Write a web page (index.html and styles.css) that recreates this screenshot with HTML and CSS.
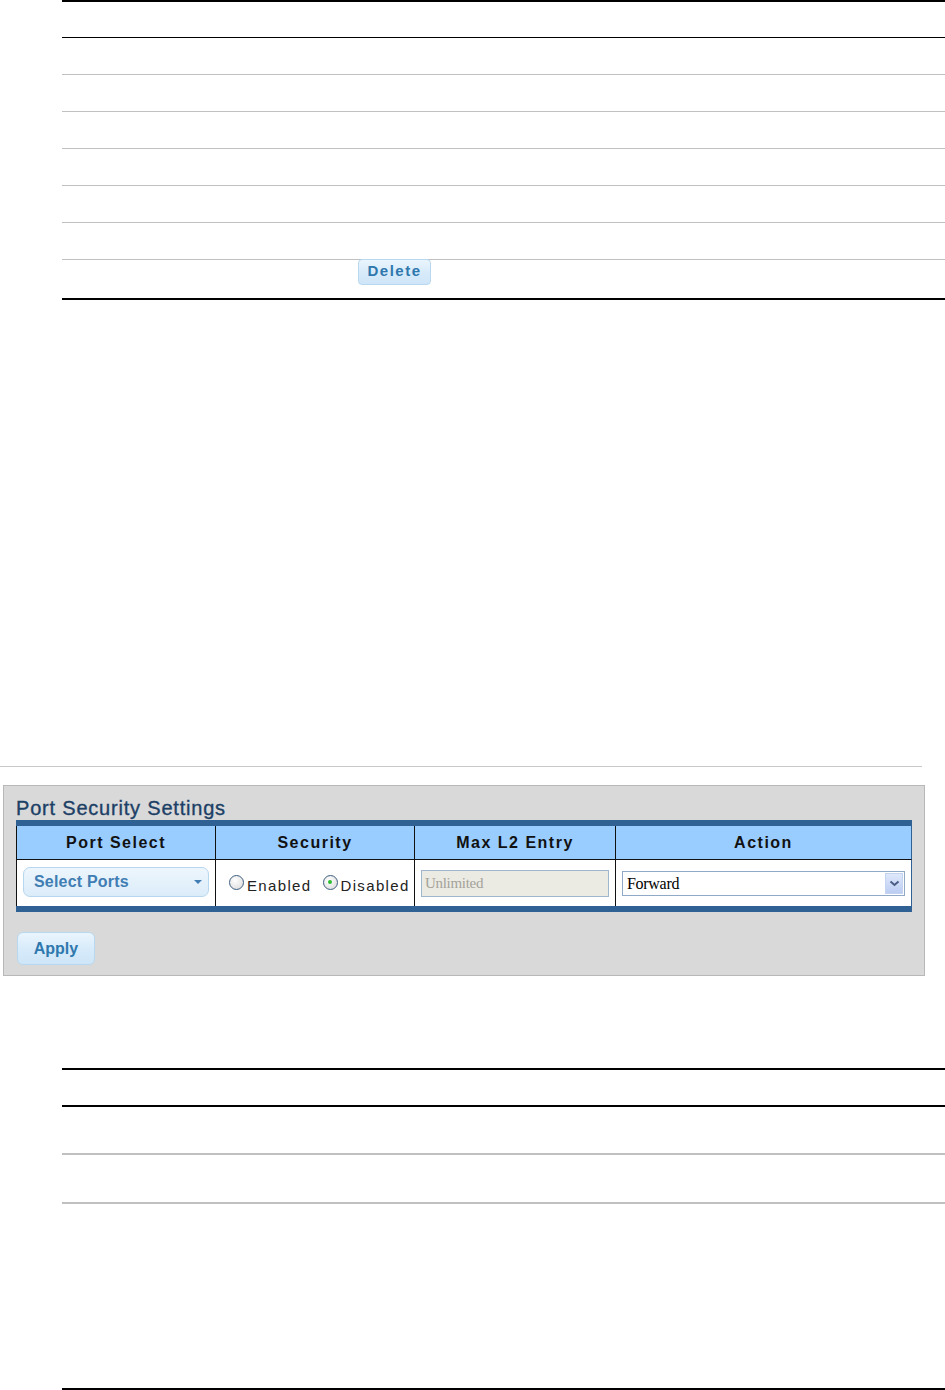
FILE: index.html
```html
<!DOCTYPE html>
<html>
<head>
<meta charset="utf-8">
<link rel="stylesheet" href="styles.css">
</head>
<body>
<div class="rules top-rules">
  <div class="row head"></div>
  <div class="row"></div>
  <div class="row"></div>
  <div class="row"></div>
  <div class="row"></div>
  <div class="row"></div>
  <div class="row"></div>
  <div class="row last"><button class="btn delete">Delete</button></div>
</div>

<div class="sep"></div>

<div class="panel">
  <div class="panel-title">Port Security Settings</div>
  <div class="tbl">
    <div class="th c1">Port Select</div>
    <div class="th c2">Security</div>
    <div class="th c3">Max L2 Entry</div>
    <div class="th c4">Action</div>
    <div class="td c1">
      <div class="portsel"><span>Select Ports</span><span class="caret"></span></div>
    </div>
    <div class="td c2">
      <span class="radio"></span><span class="rlabel">Enabled</span>
      <span class="radio on"></span><span class="rlabel">Disabled</span>
    </div>
    <div class="td c3">
      <div class="input">Unlimited</div>
    </div>
    <div class="td c4">
      <div class="select"><span>Forward</span><span class="arrow"><svg width="11" height="7" viewBox="0 0 11 7"><path d="M1.5 1.5 L5.5 5 L9.5 1.5" fill="none" stroke="#4a5d85" stroke-width="2"/></svg></span></div>
    </div>
  </div>
  <button class="btn apply">Apply</button>
</div>

<div class="rules bottom-rules">
  <div class="brow b1"></div>
  <div class="brow b2"></div>
  <div class="brow b3"></div>
  <div class="brow b4"></div>
</div>
</body>
</html>
```

FILE: styles.css
```css
html, body {
  margin: 0;
  padding: 0;
  background: #fff;
  font-family: "Liberation Sans", Arial, sans-serif;
}

.rules {
  margin-left: 62px;
}

.top-rules {
  border-top: 2px solid #000;
}
.top-rules .row {
  height: 36px;
  border-bottom: 1px solid #c0c0c0;
}
.top-rules .row.head {
  height: 35px;
  border-bottom: 1px solid #000;
}
.top-rules .row.last {
  height: 41px;
  border-bottom: 2px solid #000;
  padding-left: 296px;
  box-sizing: border-box;
}

.btn {
  display: block;
  background: linear-gradient(#eaf5fd, #d6eafa 55%, #cfe6f8);
  border: 1px solid #b8d8f0;
  border-radius: 4px;
  color: #2f78ad;
  font-family: "Liberation Sans", Arial, sans-serif;
  font-weight: bold;
  padding: 0;
  cursor: pointer;
}
.delete {
  width: 73px;
  height: 26px;
  font-size: 15px;
  letter-spacing: 1.5px;
  margin-top: -1px;
  padding-bottom: 4px;
}

.sep {
  margin-top: 466px;
  width: 922px;
  height: 1px;
  background: #c8c8c8;
}

.panel {
  margin: 18px 0 0 3px;
  width: 922px;
  height: 191px;
  background: #d9d9d9;
  border: 1px solid #b8b8b8;
  padding: 0 0 0 12px;
  box-sizing: border-box;
}
.panel-title {
  color: #1c3f66;
  font-size: 20px;
  letter-spacing: 0.8px;
  line-height: 22px;
  margin-top: 11px;
  height: 23px;
  -webkit-text-stroke: 0.35px #1c3f66;
}

.tbl {
  display: grid;
  grid-template-columns: 200px 199px 201px 296px;
  width: 896px;
  border-top: 6px solid #2f6194;
  border-bottom: 6px solid #2f6194;
  background: #fff;
}
.th {
  height: 33px;
  background: #99ccff;
  border-right: 1px solid #111;
  border-bottom: 1px solid #111;
  display: flex;
  align-items: center;
  justify-content: center;
  font-weight: bold;
  font-size: 16px;
  letter-spacing: 1.5px;
  color: #111;
}
.th.c1, .td.c1 {
  border-left: 1px solid #111;
}
.td {
  height: 46px;
  border-right: 1px solid #111;
  display: flex;
  align-items: center;
  background: #fff;
}
.th.c4, .td.c4 {
  border-right: 1px solid #2f6194;
}

.td.c1 {
  padding-left: 6px;
}
.portsel {
  width: 186px;
  height: 30px;
  box-sizing: border-box;
  border: 1px solid #b7d7ef;
  border-radius: 7px;
  background: linear-gradient(#edf6fd, #dbecf9);
  display: flex;
  align-items: center;
  justify-content: space-between;
  padding: 0 6px 0 10px;
  color: #3f7db3;
  font-weight: bold;
  font-size: 16px;
  letter-spacing: 0.2px;
  margin-top: -2px;
}
.caret {
  width: 0;
  height: 0;
  border-left: 4px solid transparent;
  border-right: 4px solid transparent;
  border-top: 4px solid #3f7db3;
}

.td.c2 {
  padding-left: 13px;
  font-size: 15px;
  letter-spacing: 1.35px;
  color: #222;
}
.radio {
  width: 15px;
  height: 15px;
  border-radius: 50%;
  border: 1px solid #3e5e80;
  background: radial-gradient(circle at 40% 35%, #fff, #d8d8d8);
  display: inline-block;
  margin-right: 3px;
  position: relative;
  top: -1px;
  box-sizing: border-box;
  flex: none;
}
.radio.on::after {
  content: "";
  position: absolute;
  left: 4.5px;
  top: 4.5px;
  width: 4px;
  height: 4px;
  border-radius: 50%;
  background: #2ebd2e;
}
.rlabel {
  margin-right: 11px;
  padding-top: 4px;
}

.td.c3 {
  padding-left: 6px;
}
.input {
  width: 188px;
  height: 27px;
  box-sizing: border-box;
  background: #ebeae3;
  border: 1px solid #9fb7cc;
  font-family: "Liberation Serif", "Times New Roman", serif;
  color: #a3a39a;
  font-size: 15px;
  display: flex;
  align-items: center;
  padding-left: 3px;
  letter-spacing: -0.3px;
  margin-top: 1px;
}

.td.c4 {
  padding-left: 6px;
}
.select {
  width: 283px;
  height: 25px;
  box-sizing: border-box;
  border: 1px solid #8fa9c6;
  background: #fff;
  display: flex;
  align-items: center;
  justify-content: space-between;
  padding-left: 4px;
  font-family: "Liberation Serif", "Times New Roman", serif;
  font-size: 16px;
  color: #000;
  letter-spacing: -0.3px;
  margin-top: 1px;
}
.arrow {
  width: 18px;
  height: 21px;
  margin-right: 1px;
  background: linear-gradient(#dfe8fb, #bccdf3);
  border: 1px solid #c4d3f0;
  box-sizing: border-box;
  display: flex;
  align-items: center;
  justify-content: center;
}

.apply {
  width: 78px;
  height: 33px;
  margin-top: 20px;
  margin-left: 1px;
  font-size: 16px;
  border-radius: 6px;
}

.bottom-rules {
  margin-top: 92px;
  border-top: 2px solid #000;
}
.brow {
  box-sizing: border-box;
}
.b1 { height: 37px; border-bottom: 2px solid #000; }
.b2 { height: 48px; border-bottom: 2px solid #c0c0c0; }
.b3 { height: 49px; border-bottom: 2px solid #c0c0c0; }
.b4 { height: 186px; border-bottom: 2px solid #000; }
```
